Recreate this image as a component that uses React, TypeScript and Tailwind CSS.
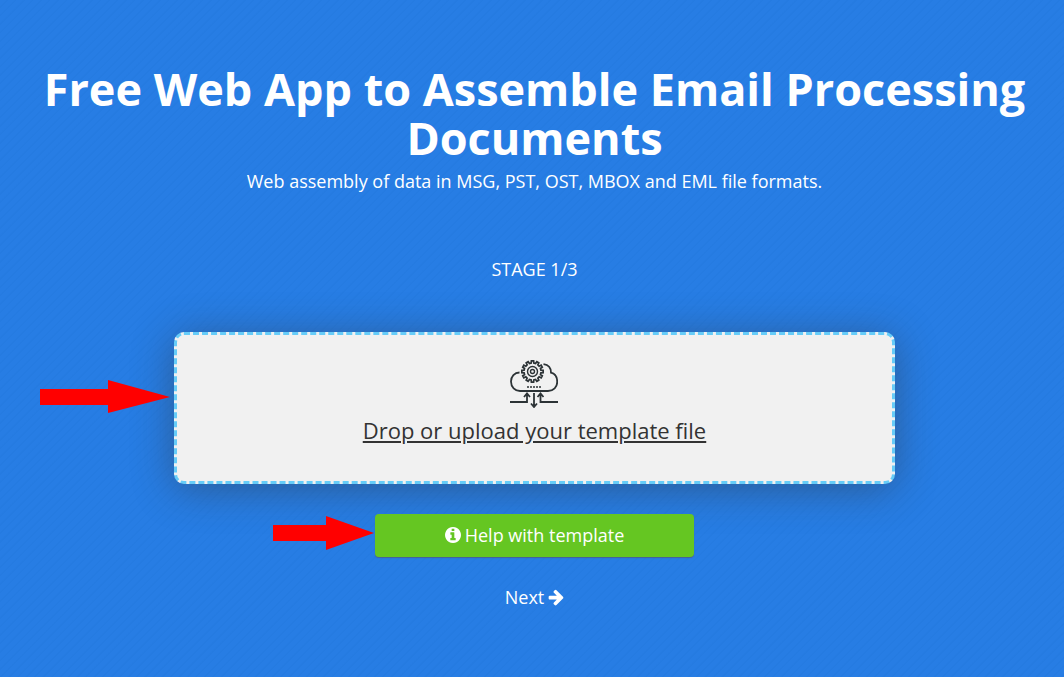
const TOOTH_COUNT = 12;

function gearPoints(cx: number, cy: number, root: number, tip: number) {
  const points: string[] = [];
  for (let i = 0; i < TOOTH_COUNT; i++) {
    const mid = (i * 360) / TOOTH_COUNT;
    const corners = [
      [root, -9],
      [tip, -6],
      [tip, 6],
      [root, 9],
    ];
    for (const [radius, offset] of corners) {
      const angle = ((mid + offset) * Math.PI) / 180;
      points.push(`${(cx + radius * Math.sin(angle)).toFixed(2)},${(cy - radius * Math.cos(angle)).toFixed(2)}`);
    }
  }
  return points.join(" ");
}

function CloudGearIcon() {
  return (
    <svg className="mr-0.5 size-12" viewBox="0 0 48 48" fill="none" stroke="#2c3336" strokeWidth="1.8" aria-hidden="true">
      <path d="M9.500 12.500C4.500 12.500 1 16.500 1 21.500C1 27 5 31 10 31H38C43.500 31 47.200 27 47.200 22C47.200 17 44.500 13.500 41 12.700C41 8 38 4.800 33.500 4.200" />
      <polygon points={gearPoints(22.5, 11.5, 8.5, 10.7)} strokeWidth="1.700" />
      <circle cx="22.500" cy="11.500" r="5" strokeWidth="1.400" />
      <circle cx="22.500" cy="11.500" r="2" strokeWidth="1.400" />
      <path d="M17 27H31" strokeDasharray="2 1" strokeWidth="1.600" />
      <path d="M0 42H17V34M14 37L17 33.500L20 37M48 42H30.500V34M27.500 37L30.500 33.500L33.500 37M24 33V47M21 43.500L24 47L27 43.500" />
    </svg>
  );
}

function InfoIcon() {
  return (
    <svg className="size-4" viewBox="128 128 1536 1536" fill="currentColor" aria-hidden="true">
      <path d="M1152 1376v-160q0-14-9-23t-23-9h-96v-512q0-14-9-23t-23-9h-320q-14 0-23 9t-9 23v160q0 14 9 23t23 9h96v320h-96q-14 0-23 9t-9 23v160q0 14 9 23t23 9h448q14 0 23-9t9-23zm-128-896v-160q0-14-9-23t-23-9h-192q-14 0-23 9t-9 23v160q0 14 9 23t23 9h192q14 0 23-9t9-23zm640 416q0 209-103 385.500t-279.500 279.500-385.500 103-385.500-103-279.500-279.500-103-385.500 103-385.500 279.500-279.500 385.500-103 385.500 103 279.500 279.500 103 385.500z" />
    </svg>
  );
}

function ArrowIcon() {
  return (
    <svg className="h-[18px] w-4" viewBox="64 0 1600 1792" fill="currentColor" aria-hidden="true">
      <path d="M1600 960q0 54-37 91l-651 651q-39 37-91 37-51 0-90-37l-75-75q-38-38-38-91t38-91l293-293h-704q-52 0-84.500-37.500t-32.500-90.500v-128q0-53 32.500-90.500t84.500-37.500h704l-293-294q-38-36-38-90t38-90l75-75q38-38 90-38 53 0 91 38l651 651q37 35 37 90z" />
    </svg>
  );
}

export default function App() {
  return (
    <main className="min-h-screen bg-[#257de6] bg-[repeating-linear-gradient(135deg,#277de4_0px,#277de4_4px,#257be1_5px,#257be1_6px)] pt-16 pb-16 pl-[5px] font-['Open_Sans',sans-serif] text-lg text-white">
      <div className="flex flex-col items-center text-center">
        <h1 className="px-8 text-[45px] leading-[49px] font-bold">
          Free Web App to Assemble Email Processing Documents
        </h1>
        <p className="mt-[5px] leading-7">Web assembly of data in MSG, PST, OST, MBOX and EML file formats.</p>
        <p className="mt-[60px] leading-7">STAGE 1/3</p>

        <div className="relative mt-[49px] w-full max-w-[721px]">
          <svg className="absolute top-12 right-full mr-1 h-[34px] w-[130px]" viewBox="0 0 130 34" aria-hidden="true">
            <path d="M0 9H68V0L130 17L68 33V25H0Z" fill="#f00" />
          </svg>
          <button
            type="button"
            className="flex h-[152px] w-full cursor-pointer flex-col items-center rounded-[10px] border-3 border-dashed border-[#66ccf8] bg-[#f1f1f1] pt-[25px] text-[#333] shadow-[0_5px_40px_rgba(50,50,50,0.45)]"
          >
            <CloudGearIcon />
            <span className="mt-[7px] text-[22px] leading-[30px] underline">Drop or upload your template file</span>
          </button>
        </div>

        <div className="relative mt-[30px] w-full max-w-[319px]">
          <svg className="absolute top-0.5 right-full h-[34px] w-[102px]" viewBox="0 0 102 34" aria-hidden="true">
            <path d="M0 9H53V0L101 17L53 34V25H0Z" fill="#f00" />
          </svg>
          <button
            type="button"
            className="flex h-[43px] w-full cursor-pointer items-center justify-center gap-1 rounded bg-[#65c622] pb-0.5 shadow-[0_1px_1px_rgba(80,90,130,0.8)]"
          >
            <InfoIcon />
            Help with template
          </button>
        </div>

        <a href="#next" className="mt-[26px] flex items-center gap-1 leading-7">
          Next
          <ArrowIcon />
        </a>
      </div>
    </main>
  );
}
